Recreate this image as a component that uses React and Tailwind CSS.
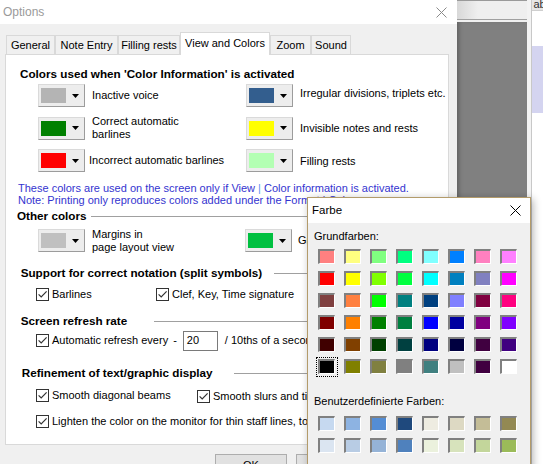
import React from 'react';

// --- Small building blocks ---
const ColorButton = ({ swatch }) => (
  <div className="flex h-[23px] w-[47px] shrink-0 items-center border border-[#dadada] border-r-[#9c9c9c] border-b-[#9c9c9c] bg-[#ededed] pl-[2px]">
    <div className={`h-[15px] w-[25px] ${swatch}`} />
    <svg className="ml-[6px]" width="7" height="4" viewBox="0 0 7 4">
      <polygon points="0,0 7,0 3.5,4" fill="#000" />
    </svg>
  </div>
);

const Check = () => (
  <span className="flex h-[13px] w-[13px] shrink-0 items-center justify-center border border-[#333] bg-white">
    <svg width="11" height="11" viewBox="0 0 11 11">
      <path d="M1.6 5.4 L4.2 8 L9.6 2.4" fill="none" stroke="#333" strokeWidth="1.2" />
    </svg>
  </span>
);

const GroupHeader = ({ title, className, lineClass }) => (
  <div className={`flex h-[14px] items-center ${className}`}>
    <span className="whitespace-nowrap text-[11.7px] font-bold leading-[14px] text-black">{title}</span>
    {lineClass && <span className={`h-px flex-1 bg-[#a0a0a0] ${lineClass}`} />}
  </div>
);

const tabs = [
  { label: 'General', w: 'w-[49px]' },
  { label: 'Note Entry', w: 'w-[63px]' },
  { label: 'Filling rests', w: 'w-[62px]' },
  { label: 'View and Colors', w: 'w-[90px]', active: true },
  { label: 'Zoom', w: 'w-[41px]' },
  { label: 'Sound', w: 'w-[40px]' },
];

const basicColors = [
  'bg-[#ff8080]', 'bg-[#ffff80]', 'bg-[#80ff80]', 'bg-[#00ff80]', 'bg-[#80ffff]', 'bg-[#0080ff]', 'bg-[#ff80c0]', 'bg-[#ff80ff]',
  'bg-[#ff0000]', 'bg-[#ffff00]', 'bg-[#80ff00]', 'bg-[#00ff40]', 'bg-[#00ffff]', 'bg-[#0080c0]', 'bg-[#8080c0]', 'bg-[#ff00ff]',
  'bg-[#804040]', 'bg-[#ff8040]', 'bg-[#00ff00]', 'bg-[#008080]', 'bg-[#004080]', 'bg-[#8080ff]', 'bg-[#800040]', 'bg-[#ff0080]',
  'bg-[#800000]', 'bg-[#ff8000]', 'bg-[#008000]', 'bg-[#008040]', 'bg-[#0000ff]', 'bg-[#0000a0]', 'bg-[#800080]', 'bg-[#8000ff]',
  'bg-[#400000]', 'bg-[#804000]', 'bg-[#004000]', 'bg-[#004040]', 'bg-[#000080]', 'bg-[#000040]', 'bg-[#400040]', 'bg-[#400080]',
  'bg-[#000000]', 'bg-[#808000]', 'bg-[#808040]', 'bg-[#808080]', 'bg-[#408080]', 'bg-[#c0c0c0]', 'bg-[#400040]', 'bg-[#ffffff]',
];

const customColors = [
  'bg-[#c6d9f0]', 'bg-[#8db3e2]', 'bg-[#548dd4]', 'bg-[#1f497d]', 'bg-[#eeece1]', 'bg-[#ddd9c3]', 'bg-[#c4bd97]', 'bg-[#938953]',
  'bg-[#dbe5f1]', 'bg-[#b8cce4]', 'bg-[#95b3d7]', 'bg-[#4f81bd]', 'bg-[#ebf1dd]', 'bg-[#d7e3bc]', 'bg-[#c3d69b]', 'bg-[#9bbb59]',
];

const Swatch = ({ bg, focused }) => (
  <div className="relative h-[15px] w-[17px] border-t-2 border-l-2 border-r border-b border-[#808080] border-r-white border-b-white">
    <div className={`h-full w-full ${bg}`} />
    {focused && <div className="absolute -inset-[4px] border border-dotted border-black" />}
  </div>
);

// --- Colour picker dialog (lies on top of the options dialog) ---
const ColorDialog = () => (
  <div className="absolute left-[307px] top-[197px] flex h-[280px] w-[224px] flex-col border border-[#b39b6a] bg-[#f0f0f0] shadow-[2px_2px_8px_rgba(0,0,0,0.3)]">
    <div className="flex h-[25px] shrink-0 items-center justify-between bg-white pl-[4px] pr-[9px]">
      <span className="text-[11.5px] text-black">Farbe</span>
      <svg width="11" height="11" viewBox="0 0 11 11">
        <path d="M0.5 0.5 L10.5 10.5 M10.5 0.5 L0.5 10.5" stroke="#000" strokeWidth="1" />
      </svg>
    </div>
    <div className="flex flex-col pl-[6px] pt-[7px]">
      <span className="text-[11px] leading-[13px] text-black">Grundfarben:</span>
      <div className="ml-[4px] mt-[6px] grid grid-cols-[repeat(8,17px)] gap-x-[9px] gap-y-[7px]">
        {basicColors.map((c, i) => (
          <Swatch key={i} bg={c} focused={i === 40} />
        ))}
      </div>
      <span className="mt-[21px] text-[11px] leading-[13px] text-black">Benutzerdefinierte Farben:</span>
      <div className="ml-[4px] mt-[8px] grid grid-cols-[repeat(8,17px)] gap-x-[9px] gap-y-[6.7px]">
        {customColors.map((c, i) => (
          <Swatch key={i} bg={c} />
        ))}
      </div>
    </div>
  </div>
);

export default function App() {
  return (
    <div className="relative flex h-[464px] w-[543px] overflow-hidden bg-[#f0f0f0] font-['Liberation_Sans',Arial,sans-serif] text-[11px] leading-[13px] text-black">
      {/* Options dialog */}
      <div className="flex w-[457px] shrink-0 flex-col bg-[#f0f0f0]">
        <div className="flex h-[24px] shrink-0 items-center justify-between bg-white pl-[3px] pr-[10px]">
          <span className="text-[12px] text-[#9a9a9a]">Options</span>
          <svg width="11" height="11" viewBox="0 0 11 11">
            <path d="M0.5 0.5 L10.5 10.5 M10.5 0.5 L0.5 10.5" stroke="#8a8a8a" strokeWidth="1" />
          </svg>
        </div>

        <div className="flex flex-col pl-[5px]">
          {/* Tabs */}
          <div className="ml-[1px] mt-[8px] flex h-[22px] items-end">
            {tabs.map((t) =>
              t.active ? (
                <div
                  key={t.label}
                  className={`relative z-10 -mb-px flex h-[23px] items-center justify-center border border-b-0 border-[#d9d9d9] bg-white pb-[1px] ${t.w}`}
                >
                  {t.label}
                </div>
              ) : (
                <div
                  key={t.label}
                  className={`flex h-[19px] items-center justify-center border-l border-t border-r border-[#d9d9d9] bg-[#f0f0f0] ${t.w}`}
                >
                  {t.label}
                </div>
              )
            )}
          </div>

          {/* Tab panel */}
          <div className="flex h-[391px] w-[444px] flex-col border border-[#d9d9d9] bg-white">
            <GroupHeader className="ml-[14px] mt-[12px]" title="Colors used when 'Color Information' is activated" />

            <div className="ml-[32px] mt-[3px] grid grid-cols-[208px_1fr] gap-y-[9.5px]">
              <div className="flex h-[23px] items-center">
                <ColorButton swatch="bg-[#b4b4b4]" />
                <span className="ml-[7px]">Inactive voice</span>
              </div>
              <div className="flex h-[23px] items-center">
                <ColorButton swatch="bg-[#335e8e]" />
                <span className="ml-[7px] -mt-[4px]">Irregular divisions, triplets etc.</span>
              </div>
              <div className="flex h-[23px] items-center">
                <ColorButton swatch="bg-[#008000]" />
                <span className="ml-[7px] leading-[13.3px]">
                  Correct automatic
                  <br />
                  barlines
                </span>
              </div>
              <div className="flex h-[23px] items-center">
                <ColorButton swatch="bg-[#ffff00]" />
                <span className="ml-[7px]">Invisible notes and rests</span>
              </div>
              <div className="flex h-[23px] items-center">
                <ColorButton swatch="bg-[#ff0000]" />
                <span className="ml-[4px]">Incorrect automatic barlines</span>
              </div>
              <div className="flex h-[23px] items-center">
                <ColorButton swatch="bg-[#b3ffb3]" />
                <span className="ml-[7px] mt-[2px]">Filling rests</span>
              </div>
            </div>

            <div className="ml-[12px] mt-[10px] whitespace-nowrap leading-[12.4px] text-[#3434d0]">
              <div>
                These colors are used on the screen only if View <span className="text-[#5f8ff0]">|</span> Color information is activated.
              </div>
              <div>Note: Printing only reproduces colors added under the Format | Color menu.</div>
            </div>

            <GroupHeader className="ml-[11px] mr-[6px] mt-[2.5px]" title="Other colors" lineClass="ml-[4px]" />

            <div className="ml-[32px] mt-[5.7px] grid grid-cols-[207px_1fr]">
              <div className="flex h-[23px] items-center">
                <ColorButton swatch="bg-[#c0c0c0]" />
                <span className="ml-[7px] leading-[12.7px]">
                  Margins in
                  <br />
                  page layout view
                </span>
              </div>
              <div className="flex h-[23px] items-center">
                <ColorButton swatch="bg-[#00c040]" />
                <span className="ml-[6px]">Grid lines</span>
              </div>
            </div>

            <GroupHeader className="ml-[14.7px] mr-[6px] mt-[14.3px]" title="Support for correct notation (split symbols)" lineClass="ml-[12px]" />

            <div className="ml-[30px] mt-[7.5px] grid h-[13px] grid-cols-[120px_1fr]">
              <div className="flex h-[13px] items-center">
                <Check />
                <span className="ml-[3px]">Barlines</span>
              </div>
              <div className="flex h-[13px] items-center">
                <Check />
                <span className="ml-[3px]">Clef, Key, Time signature</span>
              </div>
            </div>

            <GroupHeader className="ml-[14.7px] mr-[6px] mt-[13.7px]" title="Screen refresh rate" lineClass="ml-[27px]" />

            <div className="ml-[30px] mt-[2.3px] flex h-[20px] items-center">
              <Check />
              <span className="ml-[3px] whitespace-nowrap">Automatic refresh every</span>
              <span className="ml-[5px]">-</span>
              <div className="ml-[6px] flex h-[20px] w-[35px] items-center border border-[#7a7a7a] bg-white pl-[3px]">20</div>
              <span className="ml-[7px] whitespace-nowrap">/ 10ths of a second</span>
            </div>

            <GroupHeader className="ml-[15.7px] mr-[6px] mt-[15.3px]" title="Refinement of text/graphic display" lineClass="ml-[21px]" />

            <div className="ml-[30px] mt-[9.2px] grid h-[13px] grid-cols-[161px_1fr]">
              <div className="flex h-[13px] items-center">
                <Check />
                <span className="ml-[3px]">Smooth diagonal beams</span>
              </div>
              <div className="mt-[1px] flex h-[13px] items-center">
                <Check />
                <span className="ml-[3px] whitespace-nowrap">Smooth slurs and ties</span>
              </div>
            </div>

            <div className="ml-[30px] mt-[12.7px] flex h-[13px] items-center">
              <Check />
              <span className="ml-[3px] whitespace-nowrap">Lighten the color on the monitor for thin staff lines, to enhance legibility</span>
            </div>
          </div>

          {/* Dialog buttons */}
          <div className="ml-[210px] mt-[9px] flex gap-[9px]">
            <div className="flex h-[23px] w-[72px] items-center justify-center border border-[#adadad] bg-[#e1e1e1]">OK</div>
            <div className="flex h-[23px] w-[75px] items-center justify-center border border-[#adadad] bg-[#e1e1e1]">Cancel</div>
          </div>
        </div>
      </div>

      {/* Application behind the dialogs */}
      <div className="flex flex-1">
        <div className="flex w-[69.5px] flex-col">
          <div className="h-[19px] border-t border-[#9a9a9a] bg-gradient-to-r from-[#d8d8d8] to-[#efefef] to-30%" />
          <div className="h-px bg-[#a0a0a0]" />
          <div className="h-[2px] bg-[#f0f0f0]" />
          <div className="flex-1 bg-[#808080] shadow-[inset_4px_0_4px_-2px_rgba(0,0,0,0.25)]" />
        </div>
        <div className="w-[5px] border-r border-[#c8c8c8] bg-[#f3f3f3]" />
        <div className="flex flex-1 flex-col bg-white">
          <div className="h-[11px] overflow-hidden border-b border-[#cfcfcf] bg-[#e6e6e6] pl-[2px] text-[11px] leading-[8px] text-[#333]">ab</div>
          <div className="mt-[35px] h-[67px] bg-[#d4d4f0]" />
        </div>
      </div>

      <ColorDialog />
    </div>
  );
}
